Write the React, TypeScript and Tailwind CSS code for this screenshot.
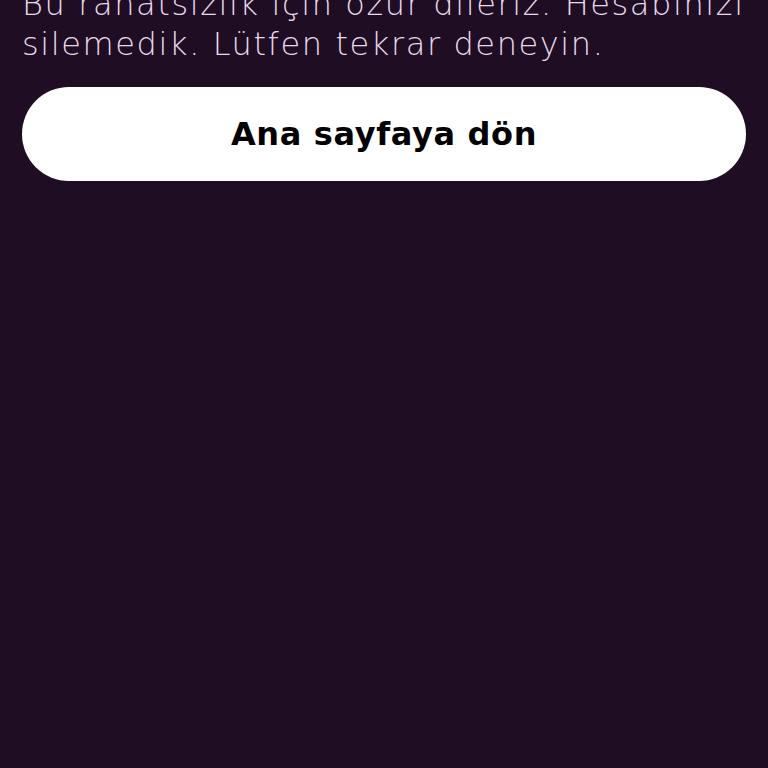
export default function App() {
  return (
    <div className="min-h-[768px] w-full overflow-hidden bg-[#1e0d23] px-[22px] font-['DejaVu_Sans','Noto_Sans',sans-serif]">
      <p className="-mt-[16px] text-[32px] font-extralight leading-[40px] tracking-[0.05em] text-[#e8d9ec]">
        Bu rahatsızlık için özür dileriz. Hesabınızı
        <br />
        silemedik. Lütfen tekrar deneyin.
      </p>
      <button className="mt-[23px] flex h-[94px] w-full items-center justify-center rounded-full bg-white text-[32px] font-bold tracking-[0.02em] text-black">
        Ana sayfaya dön
      </button>
    </div>
  );
}
